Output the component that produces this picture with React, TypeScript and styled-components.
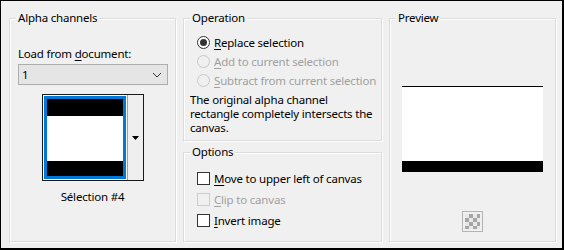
import React from "react";
import styled, { createGlobalStyle } from "styled-components";

const GlobalStyle = createGlobalStyle`
  body {
    margin: 0;
    background: #ffffff;
    font-family: "Segoe UI", "Noto Sans", sans-serif;
    font-size: 11.5px;
    letter-spacing: -0.2px;
    color: #000;
  }
`;

const Window = styled.div`
  box-sizing: border-box;
  width: 564px;
  height: 250px;
  border-style: solid;
  border-color: #000;
  border-width: 1px 2px 2px 1px;
  background: #f0f0f0;
  display: flex;
  align-items: flex-start;
  gap: 7px;
  padding: 9px 6px 0 8px;
  white-space: nowrap;
`;

const Column = styled.div`
  display: flex;
  flex-direction: column;
  gap: 3px;
`;

const Group = styled.fieldset<{ $w: number; $h: number; $pt: number }>`
  box-sizing: border-box;
  margin: 0;
  min-width: 0;
  width: ${(p) => p.$w}px;
  height: ${(p) => p.$h}px;
  padding: ${(p) => p.$pt}px 8px 0 8px;
  border: 1px solid #dcdcdc;
  box-shadow: inset 1px 1px 0 #fff, 1px 1px 0 #fff;
`;

const Title = styled.legend`
  padding: 0 2px;
  margin-left: -2px;
  line-height: 16px;
  background: #f0f0f0;
`;

const Label = styled.div`
  line-height: 16px;
`;

const Key = styled.span`
  text-decoration: underline;
  text-underline-offset: 2px;
`;

const Dropdown = styled.div`
  box-sizing: border-box;
  margin-top: 2px;
  width: 150px;
  height: 21px;
  border: 1px solid #adadad;
  background: #e5e5e5;
  display: flex;
  align-items: center;
  justify-content: space-between;
  padding: 0 5px 0 3px;
`;

const ThumbFrame = styled.div`
  box-sizing: border-box;
  margin: 9px auto 0;
  width: 102px;
  height: 87px;
  border: 1px solid #1a1a1a;
  background: #fff;
  display: flex;
`;

const ThumbSelect = styled.div`
  box-sizing: border-box;
  margin: 1px;
  width: 82px;
  height: 83px;
  border: 3px solid #0078d7;
  display: flex;
  flex-direction: column;
  justify-content: space-between;
  background: #fff;
`;

const Bar = styled.div<{ $h: number }>`
  height: ${(p) => p.$h}px;
  background: #000;
`;

const ThumbButton = styled.div`
  flex: 1;
  border-left: 1px solid #a0a0a0;
  background: #efefef;
  display: flex;
  align-items: center;
  justify-content: center;
`;

const Caption = styled.div`
  margin-top: 8px;
  text-align: center;
  line-height: 16px;
`;

const OptionRow = styled.div<{ $h: number; $disabled?: boolean }>`
  height: ${(p) => p.$h}px;
  display: flex;
  align-items: center;
  gap: 4px;
  padding-left: 5px;
  color: ${(p) => (p.$disabled ? "#a0a0a0" : "#000")};
`;

const RadioDot = styled.span<{ $checked?: boolean; $disabled?: boolean }>`
  box-sizing: border-box;
  flex: none;
  width: 13px;
  height: 13px;
  border-radius: 50%;
  border: 1px solid ${(p) => (p.$disabled ? "#c8c8c8" : "#333")};
  background: ${(p) => (p.$disabled ? "#f0f0f0" : "#fff")};
  display: flex;
  align-items: center;
  justify-content: center;
  &::after {
    content: "";
    display: ${(p) => (p.$checked ? "block" : "none")};
    width: 7px;
    height: 7px;
    border-radius: 50%;
    background: #333;
  }
`;

const CheckBox = styled.span<{ $disabled?: boolean }>`
  box-sizing: border-box;
  flex: none;
  width: 13px;
  height: 13px;
  border: 1px solid ${(p) => (p.$disabled ? "#cccccc" : "#333")};
  background: ${(p) => (p.$disabled ? "#f0f0f0" : "#fff")};
`;

const Description = styled.div`
  margin: 3px 0 0 -2px;
  line-height: 14px;
`;

const PreviewImage = styled.div`
  box-sizing: border-box;
  margin: 60px auto 0;
  width: 141px;
  height: 86px;
  background: #fff;
  border-top: 1px solid #000;
  display: flex;
  flex-direction: column;
  justify-content: flex-end;
`;

const CheckerButton = styled.div`
  box-sizing: border-box;
  margin: 39px auto 0;
  width: 21px;
  height: 21px;
  border: 1px solid #b4b4b4;
  padding: 2px;
  background: #f0f0f0;
  &::after {
    content: "";
    display: block;
    width: 100%;
    height: 100%;
    background: repeating-conic-gradient(#a6a6a6 0 25%, #e8e8e8 0 50%) 0 0 / 8px 8px;
  }
`;

const Chevron = () => (
  <svg width="10" height="6" viewBox="0 0 10 6">
    <path d="M1 1 L5 5 L9 1" fill="none" stroke="#333" strokeWidth="1" />
  </svg>
);

const DownArrow = () => (
  <svg width="7" height="4" viewBox="0 0 7 4">
    <path d="M0 0 H7 L3.5 4 Z" fill="#000" />
  </svg>
);

const radios = [
  { key: "R", rest: "eplace selection", checked: true, disabled: false },
  { key: "A", rest: "dd to current selection", checked: false, disabled: true },
  { key: "S", rest: "ubtract from current selection", checked: false, disabled: true },
];

const checks = [
  { key: "M", rest: "ove to upper left of canvas", disabled: false },
  { key: "C", rest: "lip to canvas", disabled: true },
  { key: "I", rest: "nvert image", disabled: false },
];

export default function App() {
  return (
    <>
      <GlobalStyle />
      <Window>
        <Group $w={167} $h={232} $pt={20}>
          <Title>Alpha channels</Title>
          <Label>
            Load from <Key>d</Key>ocument:
          </Label>
          <Dropdown>
            <span>1</span>
            <Chevron />
          </Dropdown>
          <ThumbFrame>
            <ThumbSelect>
              <Bar $h={17} />
              <Bar $h={15} />
            </ThumbSelect>
            <ThumbButton>
              <DownArrow />
            </ThumbButton>
          </ThumbFrame>
          <Caption>Sélection #4</Caption>
        </Group>

        <Column>
          <Group $w={199} $h={131} $pt={7}>
            <Title>Operation</Title>
            {radios.map((r) => (
              <OptionRow key={r.key} $h={19} $disabled={r.disabled}>
                <RadioDot $checked={r.checked} $disabled={r.disabled} />
                <span>
                  <Key>{r.key}</Key>
                  {r.rest}
                </span>
              </OptionRow>
            ))}
            <Description>
              The original alpha channel
              <br />
              rectangle completely intersects the
              <br />
              canvas.
            </Description>
          </Group>
          <Group $w={199} $h={98} $pt={8}>
            <Title>Options</Title>
            {checks.map((c) => (
              <OptionRow key={c.key} $h={21} $disabled={c.disabled}>
                <CheckBox $disabled={c.disabled} />
                <span>
                  <Key>{c.key}</Key>
                  {c.rest}
                </span>
              </OptionRow>
            ))}
          </Group>
        </Column>

        <Group $w={167} $h={232} $pt={0}>
          <Title>Preview</Title>
          <PreviewImage>
            <Bar $h={11} />
          </PreviewImage>
          <CheckerButton />
        </Group>
      </Window>
    </>
  );
}
